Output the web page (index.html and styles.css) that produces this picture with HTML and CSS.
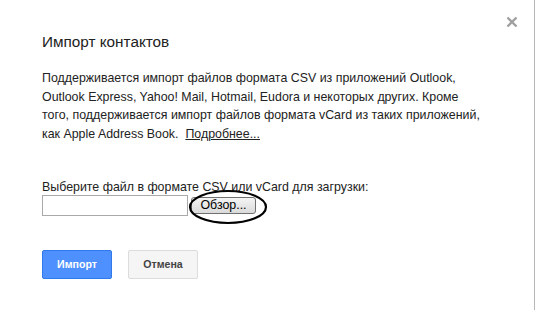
FILE: index.html
```html
<!DOCTYPE html>
<html lang="ru">
<head>
<meta charset="utf-8">
<link rel="stylesheet" href="styles.css">
</head>
<body>
<div class="dialog">
  <svg class="close" width="12" height="12" viewBox="0 0 12 12"><path d="M1.5 1.5L10.5 10.5M10.5 1.5L1.5 10.5" stroke="#a0a0a0" stroke-width="2.4"/></svg>
  <h1 class="title">Импорт контактов</h1>
  <p class="desc">Поддерживается импорт файлов формата CSV из приложений Outlook,<br>Outlook Express, Yahoo! Mail, Hotmail, Eudora и некоторых других. Кроме<br>того, поддерживается импорт файлов формата vCard из таких приложений,<br>как Apple Address Book.&nbsp; <a class="more" href="#">Подробнее...</a></p>
  <div class="label">Выберите файл в формате CSV или vCard для загрузки:</div>
  <div class="file-row">
    <div class="file-input"></div>
    <div class="browse-wrap">
      <div class="browse">Обзор...</div>
      <svg class="ellipse" width="82" height="38" viewBox="0 0 82 38"><ellipse cx="40" cy="18" rx="38" ry="16" fill="none" stroke="#000" stroke-width="2.2"/></svg>
    </div>
  </div>
  <div class="actions">
    <div class="btn btn-primary">Импорт</div>
    <div class="btn btn-cancel">Отмена</div>
  </div>
</div>
</body>
</html>
```
FILE: styles.css
```css
html, body {
  margin: 0;
  padding: 0;
  background: #fff;
}
body {
  width: 535px;
  height: 310px;
  overflow: hidden;
  font-family: Arial, "Liberation Sans", sans-serif;
  color: #222;
}
.dialog {
  position: relative;
  width: 535px;
  height: 310px;
  border-right: 1px solid #b8b8b8;
  box-sizing: border-box;
  padding: 0 0 0 42px;
}
.close {
  position: absolute;
  left: 506px;
  top: 16px;
}
.title {
  margin: 0;
  padding-top: 32px;
  font-size: 15.3px;
  font-weight: normal;
  line-height: 20px;
  color: #222;
}
.desc {
  margin: 17px 0 0;
  width: 470px;
  font-size: 12.4px;
  line-height: 18.5px;
  color: #222;
  white-space: nowrap;
}
.more {
  color: #222;
  text-decoration: underline;
}
.label {
  margin-top: 36px;
  font-size: 12.4px;
  line-height: 16px;
  color: #222;
}
.file-row {
  display: flex;
  align-items: flex-start;
}
.file-input {
  width: 144px;
  height: 19px;
  border: 1px solid #a9a9a9;
  background: #fff;
}
.browse-wrap {
  position: relative;
  margin-left: 3px;
  margin-top: 2px;
}
.browse {
  width: 63px;
  height: 15px;
  border: 1px solid #707070;
  border-radius: 3px;
  background: linear-gradient(#f4f4f4, #dadada);
  font-size: 12.4px;
  line-height: 15px;
  text-align: center;
  color: #000;
}
.ellipse {
  position: absolute;
  left: -3px;
  top: -8px;
}
.actions {
  display: flex;
  gap: 16px;
  margin-top: 34px;
}
.btn {
  width: 70px;
  height: 29px;
  box-sizing: border-box;
  border-radius: 2px;
  font-size: 10.6px;
  font-weight: bold;
  line-height: 27px;
  text-align: center;
}
.btn-primary {
  background: #4d90fe;
  border: 1px solid #3079ed;
  color: #fff;
}
.btn-cancel {
  background: #f5f5f5;
  border: 1px solid #dcdcdc;
  color: #444;
}
```
